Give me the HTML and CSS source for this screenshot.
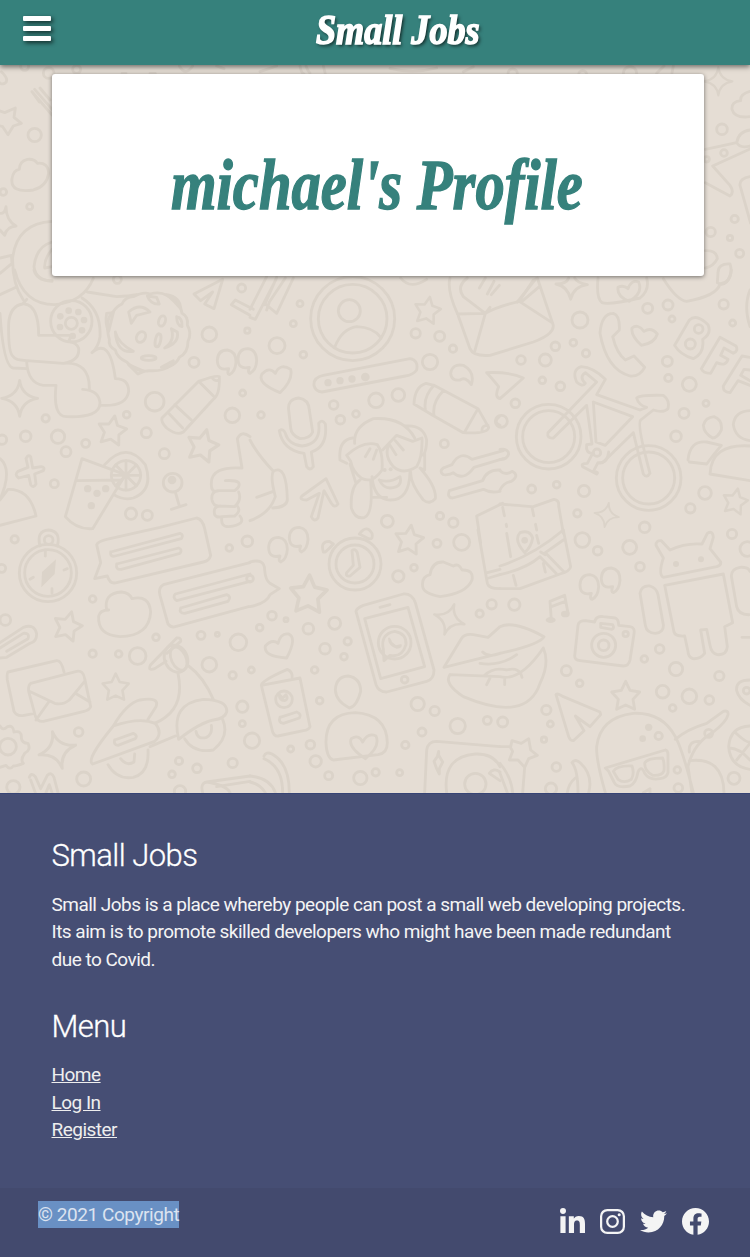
FILE: index.html
```html
<!DOCTYPE html>
<html lang="en">
<head>
<meta charset="utf-8">
<title>Small Jobs</title>
<link rel="stylesheet" href="styles.css">
</head>
<body>
<header class="navbar">
  <svg class="menu-icon" viewBox="0 0 28 25"><rect width="28" height="5" rx="1"/><rect y="10" width="28" height="5" rx="1"/><rect y="20" width="28" height="5" rx="1"/></svg>
  <div class="brand"><span class="brand-text">Small Jobs</span></div>
</header>
<main class="stage">
  <svg class="doodles" viewBox="0 65 750 728" preserveAspectRatio="none" aria-hidden="true">
    <defs>
      <path id="star" d="M0-42L13-15L42-10L22 12L27 42L0 29L-27 42L-22 12L-42-10L-13-15Z"/>
      <path id="spark" d="M0-54Q6-8 54 0Q6 8 0 54Q-6 8-54 0Q-6-8 0-54Z"/>
      <path id="quote" d="M8 38Q0 36 6 20Q-28 28-28-6Q-26-36 2-36Q28-32 28 0Q26 30 8 38Z"/>
    </defs>
    <g transform="scale(.33333)">
      <circle cx="74" cy="199" r="12"/><circle cx="146" cy="219" r="16"/><circle cx="230" cy="208" r="12"/><circle cx="104" cy="405" r="20"/><circle cx="10" cy="576" r="10"/><circle cx="89" cy="620" r="9"/>
      <path d="M4 215Q30 240 14 250Q0 256-6 240M-10 330L14 338L46 324L42 352L64 370L40 378L24 404L8 380L-12 374M36 536Q40 510 58 508Q58 484 82 478Q104 476 112 490Q144 486 146 520Q140 560 100 570Q30 580 36 536M96 275L156 345M104 268L156 328M120 264L150 300M96 275L118 306M0 640Q14 642 18 620Q18 660 48 678Q20 680 14 706L0 690M156 664Q50 670 38 774Q36 850 70 900M156 726Q108 740 102 800Q106 840 156 844M156 748Q132 776 134 804L156 800M0 774L34 766L36 790L0 820M538 198Q556 230 578 198M650 198L672 206M366 220L378 220M450 220L466 220M780 215L830 198M900 198Q904 220 912 222M918 198Q924 214 930 220M970 198L976 222M1170 205Q1240 222 1310 204M1390 215L1420 200"/>
    </g>
    <g transform="translate(500 0) scale(.33333)">
      <circle cx="38" cy="221" r="14"/><circle cx="248" cy="224" r="12"/><circle cx="390" cy="220" r="20"/><circle cx="666" cy="388" r="16"/><circle cx="672" cy="459" r="10"/><circle cx="704" cy="657" r="11"/><circle cx="632" cy="696" r="14"/><circle cx="690" cy="714" r="8"/><circle cx="719" cy="760" r="12"/><circle cx="620" cy="478" r="8"/>
      <use href="#spark" transform="translate(655 244) scale(.78)"/>
      <path d="M492 198L470 220M520 198L516 220M750 274Q720 282 722 302Q694 304 696 328Q704 356 750 350M616 448L710 428Q716 394 750 390M710 428Q720 446 750 438M752 446L638 498L690 556Q704 576 690 588L616 548M750 530Q718 536 720 556L752 670M616 752Q650 750 652 776Q640 800 616 804M654 818Q654 790 690 792Q700 820 680 846Q666 858 652 848Z"/>
    </g>
    <g transform="translate(0 270) scale(.33333)">
      <circle cx="352" cy="28" r="12"/><circle cx="725" cy="54" r="12"/><circle cx="628" cy="193" r="22"/><circle cx="582" cy="277" r="15"/><circle cx="742" cy="182" r="8"/><circle cx="728" cy="369" r="9"/><circle cx="697" cy="436" r="22"/><circle cx="464" cy="395" r="28"/><circle cx="380" cy="434" r="10"/><circle cx="439" cy="488" r="15"/><circle cx="493" cy="551" r="15"/><circle cx="137" cy="445" r="11"/><circle cx="77" cy="499" r="16"/><circle cx="174" cy="500" r="20"/><circle cx="198" cy="545" r="15"/><circle cx="257" cy="520" r="12"/><circle cx="6" cy="509" r="14"/><circle cx="163" cy="641" r="12"/><circle cx="393" cy="731" r="17"/><circle cx="442" cy="736" r="15"/><circle cx="44" cy="808" r="11"/>
      <circle cx="214" cy="154" r="62"/><circle cx="214" cy="160" r="18"/>
      <g class="solid"><circle cx="181" cy="139" r="10"/><circle cx="206" cy="122" r="10"/><circle cx="235" cy="126" r="10"/><circle cx="252" cy="150" r="10"/><circle cx="246" cy="181" r="10"/><circle cx="180" cy="171" r="10"/><circle cx="218" cy="198" r="10"/><circle cx="263" cy="656" r="11"/><circle cx="291" cy="670" r="11"/><circle cx="317" cy="656" r="11"/><circle cx="274" cy="707" r="11"/><circle cx="516" cy="630" r="13"/></g>
      <path d="M44 0Q70 104 164 104Q250 98 280 25M102 0Q110 34 156 32M0 74L48 52M80 88L68 102Q30 108 26 160Q24 250 40 260Q46 270 80 272L190 280Q240 272 236 235Q230 218 206 214L214 196L116 196Q116 108 74 102M0 130Q10 290 40 294L80 296M80 276Q84 340 130 346L168 346Q158 440 200 440Q300 444 300 398Q296 360 248 358M190 280Q270 274 268 358M246 84Q304 120 300 200Q296 230 276 248Q330 200 346 326Q386 326 386 364Q380 410 304 406M262 66L350 80Q390 78 410 74"/>
      <path d="M340 125Q350 108 366 102Q376 80 400 80Q430 64 450 72Q480 64 500 76Q540 90 546 130Q566 140 562 165Q576 190 564 214Q564 250 538 262Q530 280 510 288Q490 304 450 302Q410 310 380 276Q350 262 346 240Q324 230 328 208Q312 150 340 125Z"/>
      <path d="M386 126Q420 96 450 126L410 136L394 160ZM442 78L470 82L478 102Q452 104 442 78M500 74Q540 80 542 116Q520 90 500 74M320 130L340 128L326 184Q314 160 320 130M346 186Q354 220 400 244Q350 252 346 186M532 186Q538 220 494 234Q526 214 514 176ZM530 140Q548 144 546 170Q530 166 530 140M386 284L432 304L414 312ZM484 292L520 272Q520 294 484 292"/>
      <ellipse cx="486" cy="153" rx="10" ry="16" transform="rotate(18 486 153)"/><ellipse cx="423" cy="201" rx="13" ry="17" transform="rotate(28 423 201)"/><ellipse cx="474" cy="211" rx="8" ry="20" transform="rotate(12 474 211)"/><ellipse cx="446" cy="264" rx="22" ry="7"/>
      <use href="#spark" transform="translate(59 385)"/><use href="#star" transform="translate(337 479) rotate(10)"/><use href="#star" transform="translate(609 524) rotate(14) scale(1.1)"/>
      <path d="M582 72L668 28L642 116L614 102L638 66L602 92ZM694 104L706 90L760 118M694 104L750 136M486 444L596 334Q650 314 658 320Q660 374 640 388L550 486Q530 498 500 474Q482 456 486 444M596 334L644 382M524 404L574 450M506 430L548 474M636 322Q644 336 658 330"/>
      <use href="#quote" transform="translate(680 276)"/>
      <path d="M92 560Q84 552 78 566L84 592L54 604Q42 614 56 624L86 616L92 644Q100 656 108 642L104 612L130 602Q136 592 124 590L98 594ZM0 566Q30 590 14 650L0 690L24 658Q90 656 108 738L0 766M246 566L376 614L278 776Q230 780 196 740ZM230 632L366 630M314 584Q380 510 436 584Q462 660 400 684Q370 692 342 674"/>
      <circle cx="378" cy="616" r="44"/><path d="M334 616H422M378 572V660M347 585L409 647M347 647L409 585"/>
      <circle cx="518" cy="638" r="28"/><path d="M526 666L538 708M514 718L558 704M750 500Q724 480 712 506L726 594Q634 588 634 640Q632 670 656 662H704Q722 650 716 638Q706 630 676 632M656 662Q632 664 636 690Q640 710 660 708L704 710Q726 690 716 666M660 708Q638 710 644 734Q650 744 666 740L704 738Q724 724 712 708M666 740Q660 770 686 770Q740 764 720 738"/>
    </g>
    <g transform="translate(250 270) scale(.33333)">
      <circle cx="150" cy="101" r="9"/><circle cx="130" cy="161" r="9"/><circle cx="81" cy="227" r="24"/><circle cx="160" cy="254" r="10"/><circle cx="33" cy="435" r="10"/><circle cx="251" cy="405" r="13"/><circle cx="271" cy="449" r="13"/><circle cx="318" cy="432" r="10"/><circle cx="378" cy="391" r="22"/><circle cx="445" cy="375" r="19"/><circle cx="497" cy="190" r="14"/><circle cx="569" cy="199" r="15"/><circle cx="609" cy="236" r="11"/><circle cx="540" cy="276" r="23"/><circle cx="583" cy="521" r="12"/><circle cx="412" cy="754" r="18"/><circle cx="570" cy="738" r="11"/><circle cx="610" cy="758" r="14"/>
      <circle cx="308" cy="146" r="126"/><circle cx="308" cy="146" r="103"/><circle cx="298" cy="122" r="33"/>
      <g class="solid"><circle cx="234" cy="338" r="11"/><circle cx="270" cy="332" r="11"/><circle cx="306" cy="327" r="11"/><circle cx="346" cy="321" r="13"/><circle cx="404" cy="600" r="6"/><circle cx="422" cy="598" r="6"/></g>
      <use href="#quote" transform="translate(-8 272)"/>
      <path d="M254 232Q276 176 320 170Q370 172 392 202M0 118L50 20M0 142L16 148L78 28M44 104L80 22M46 102L80 130L130 24M50 120L58 96L106 24M90 368Q20 340 36 312Q58 288 76 310Q90 278 122 298Q130 330 90 368ZM192 346Q190 322 220 316L480 266Q506 270 500 300Q490 314 466 318L216 366Q196 364 192 346M452 24Q480 60 530 28"/>
      <use href="#star" transform="translate(533 119) rotate(10) scale(.92)"/>
      <path d="M600 24Q590 60 622 130L660 236Q670 260 720 256L850 216Q920 190 908 160L862 24M622 132L706 130L674 244M652 24Q618 50 640 80L706 130Q740 110 808 94L906 158M706 130L720 112M808 94L850 30M816 94L868 50M706 24L688 54M732 34L712 72M748 46L724 74M602 310Q606 280 640 286Q676 306 664 344Q646 318 630 330Q604 334 602 310M492 402Q494 350 528 340L552 346L684 416L716 472Q714 492 640 488L548 436ZM552 346Q520 380 526 418M580 362Q546 396 552 436M684 416L644 486M714 466Q694 466 696 484M710 308Q780 305 820 324L750 386Q732 382 746 350Q724 322 710 308M748 440Q728 456 750 466"/>
      <path d="M116 420Q112 388 146 384Q176 388 178 420L188 486Q180 506 150 506Q124 496 122 474ZM88 482Q100 474 106 490Q116 524 156 528Q214 522 206 460Q216 446 226 462Q234 530 184 546L190 590Q180 604 170 590L162 550Q98 540 88 482M0 510Q20 550 70 604Q110 580 112 690Q110 712 68 714M70 604Q60 620 76 680Q60 730 0 752M20 682L70 664M228 626L264 702Q254 716 244 700L222 662L204 744Q192 758 184 740L208 670L170 690Q146 690 156 678ZM314 520Q310 470 370 446Q460 440 494 504M466 468Q520 464 530 510Q530 540 520 556M308 504Q264 510 270 570L290 580M290 556Q340 510 382 524Q400 550 396 600Q370 640 336 626Q308 606 302 574L290 556M346 560L360 536M370 568L380 540M398 540L440 496L488 514L516 504Q518 560 500 590Q460 616 430 590Q404 560 414 532M436 512L460 540M420 526L438 554M300 582L318 640M366 620Q372 690 422 690Q478 690 480 606M330 630Q300 650 304 714Q316 750 344 742Q370 730 362 634M482 606Q480 640 520 690Q540 706 556 686Q560 650 510 594L524 600L524 550M388 630Q420 640 450 620Q456 640 440 650Q404 664 388 630M370 682H410"/>
      <path d="M580 594L606 584Q630 540 666 568L760 542M580 594Q566 604 580 614Q600 616 610 608Q640 636 672 592L760 566M598 662L698 632Q710 598 750 600M598 662Q590 682 608 684L700 658Q720 670 750 664M758 700L680 738L692 820"/>
    </g>
    <g transform="translate(500 270) scale(.33333)">
      <circle cx="240" cy="150" r="24"/><circle cx="166" cy="229" r="13"/><circle cx="220" cy="218" r="10"/><circle cx="258" cy="250" r="11"/><circle cx="136" cy="270" r="18"/><circle cx="63" cy="270" r="13"/><circle cx="127" cy="331" r="10"/><circle cx="181" cy="349" r="13"/><circle cx="46" cy="400" r="13"/><circle cx="4" cy="454" r="18"/><circle cx="443" cy="115" r="15"/><circle cx="504" cy="105" r="15"/><circle cx="516" cy="147" r="9"/><circle cx="671" cy="103" r="14"/><circle cx="698" cy="159" r="9"/><circle cx="502" cy="274" r="15"/><circle cx="505" cy="324" r="11"/><circle cx="568" cy="343" r="21"/><circle cx="618" cy="400" r="9"/><circle cx="552" cy="430" r="15"/><circle cx="528" cy="499" r="16"/><circle cx="95" cy="657" r="12"/><circle cx="170" cy="644" r="10"/><circle cx="252" cy="663" r="17"/><circle cx="232" cy="730" r="11"/><circle cx="434" cy="772" r="16"/><circle cx="571" cy="715" r="14"/><circle cx="615" cy="669" r="19"/><circle cx="596" cy="177" r="13"/><circle cx="571" cy="222" r="15"/>
      <path d="M168 42Q200 42 206 24M224 24Q230 38 262 44Q220 50 212 88Q204 50 168 42M294 24Q288 84 306 98Q326 106 420 84Q450 60 440 24M388 94Q350 80 354 52Q370 44 384 56Q394 28 416 36Q430 70 388 94M490 26Q530 90 560 94Q650 78 660 42Q690 40 694 0M52 96L108 26M750 60Q730 110 750 170M340 130Q360 136 358 180L338 200Q350 250 376 270L402 258L434 292Q420 320 390 318Q320 300 300 190Q304 130 340 130M424 226Q392 196 396 174Q414 160 432 184Q454 170 472 192Q464 220 424 226ZM524 226L568 150Q590 130 624 164Q636 190 608 208Q614 250 580 266Q540 254 524 226M660 202L708 228Q716 242 700 250L672 234L662 256L684 268Q678 290 650 278L632 310Q608 310 604 296ZM750 262L726 258L670 348Q668 366 690 368L714 332L750 346M750 300L732 298L722 316L750 332"/>
      <circle cx="146" cy="500" r="97"/><circle cx="146" cy="500" r="78"/><circle cx="446" cy="624" r="97"/><circle cx="446" cy="624" r="78"/>
      <path d="M144 488L290 336L256 308Q236 320 256 340Q246 352 230 336Q214 300 244 290Q280 292 316 328L290 374L420 420L440 412Q416 406 410 384Q420 374 490 376Q510 390 504 416Q490 430 460 420L422 450Q410 462 450 610Q440 626 430 612L400 488L312 574Q306 582 294 578L280 604Q298 606 290 612L248 590Q242 580 262 580L278 550Q256 550 260 524L276 522L260 406L160 504Q140 506 144 488M280 396L398 440L316 526L288 516Z"/><circle cx="291" cy="548" r="11"/>
      <path d="M326 546Q322 580 300 578M610 466Q616 442 642 440Q668 450 664 480Q652 504 638 504Q612 490 610 466M700 464Q704 424 750 422M700 464Q706 506 750 512M564 570Q570 510 620 516L664 526Q640 554 620 582L568 576M630 612Q634 520 750 528M630 612L750 632M0 538Q26 536 26 552Q20 570 0 568M0 602Q16 618 36 604Q60 616 34 634Q10 638 0 660M0 702Q90 710 100 710L162 688Q178 690 176 708L190 790"/>
      <path class="dash" d="M8 712L20 770M96 712L110 780"/>
      <use href="#spark" transform="translate(320 735) rotate(10) scale(.68)"/><use href="#star" transform="translate(706 692) rotate(12) scale(.88)"/>
    </g>
    <g transform="translate(0 530) scale(.33333)">
      <circle cx="5" cy="115" r="12"/><circle cx="278" cy="207" r="10"/><circle cx="16" cy="270" r="16"/><circle cx="278" cy="371" r="11"/><circle cx="356" cy="372" r="10"/><circle cx="413" cy="378" r="25"/><circle cx="468" cy="322" r="10"/><circle cx="603" cy="316" r="12"/><circle cx="652" cy="313" r="6"/><circle cx="715" cy="337" r="25"/><circle cx="628" cy="404" r="22"/><circle cx="698" cy="436" r="11"/><circle cx="688" cy="54" r="10"/><circle cx="742" cy="34" r="16"/><circle cx="727" cy="530" r="17"/><circle cx="727" cy="581" r="9"/><circle cx="236" cy="606" r="13"/><circle cx="251" cy="747" r="21"/><circle cx="40" cy="772" r="20"/><circle cx="537" cy="693" r="11"/><circle cx="591" cy="715" r="13"/><circle cx="516" cy="733" r="10"/><circle cx="698" cy="699" r="14"/><circle cx="540" cy="784" r="17"/>
      <circle cx="144" cy="129" r="86"/><circle cx="144" cy="129" r="70"/><circle cx="146" cy="30" r="13"/><path d="M120 48Q108 2 146 0Q184 4 172 48"/><path class="solid" d="M168 88L126 126L124 172L164 132Z"/><path d="M136 60V78M90 148L100 142M156 176V190M192 120L202 116"/>
      <path d="M284 146L302 98L290 44Q294 34 320 28L480-8L590-36Q608-32 614-4L632 76Q628 92 610 96L350 158Q330 164 322 138ZM332 66L540 10Q552 14 544 26L346 78Q330 82 332 66M350 102L536 54Q548 58 540 70L364 118Q346 120 350 102M750 98L490 164Q474 172 480 196L504 282Q514 294 526 290L746 230M750 132L526 192Q516 202 530 212L750 154M542 234L680 194Q696 200 684 214L554 250Q536 250 542 234M320 240Q310 190 364 186Q388 188 396 206Q448 194 452 246Q448 318 360 320Q292 316 296 258Q300 240 326 240Z"/>
      <use href="#star" transform="translate(204 286) rotate(15)"/><use href="#star" transform="translate(347 470) scale(.93)"/><use href="#spark" transform="translate(172 660) rotate(-15) scale(1.05)"/>
      <path d="M0 338L70 292Q104 280 110 312Q110 336 90 340L20 382L0 384M0 354L70 310Q90 308 84 326L20 364M24 426L170 392Q184 390 192 426M24 426Q20 430 22 450L42 544Q50 560 72 556L104 550M92 460L230 424Q250 420 254 446L272 530Q268 540 252 544L130 574Q112 576 106 558L86 484Q84 466 92 460M88 484L164 520Q188 526 208 510L254 454M146 516L108 570M226 490L270 516"/>
      <circle cx="24" cy="650" r="25"/><path d="M0 588Q8 604 22 590Q40 584 42 606Q66 600 64 624Q66 640 84 640Q94 660 74 670Q60 690 70 700Q50 708 40 708Q30 722 18 706L0 712M88 742Q94 726 106 740L122 776L142 736Q154 724 162 742L174 788M92 750L106 788M138 788L148 764L156 788"/>
      <path d="M278 702Q256 690 340 588Q380 520 420 510Q480 500 468 530L444 568M278 702L464 634Q490 610 466 580Q420 560 340 588M464 580Q558 540 534 430M450 650L526 618M344 630L400 610Q414 616 406 626L354 646Q340 644 344 630M324 704Q350 750 400 742Q448 730 444 660M362 686Q380 710 402 696L404 672M536 628Q510 520 610 508Q684 510 680 546Q674 566 640 570Q600 578 536 628M554 626Q580 670 640 660Q690 620 668 568M588 604Q592 630 620 622Q638 612 634 586M566 408Q610 440 640 508M452 404L530 324Q544 322 542 334L500 370M452 404Q442 424 464 416L498 394"/>
      <ellipse cx="528" cy="386" rx="34" ry="42" transform="rotate(-25 528 386)"/><ellipse cx="536" cy="386" rx="22" ry="37" transform="rotate(-25 536 386)"/>
      <path d="M608 788Q600 760 620 756L750 738M620 756Q680 766 690 788M650 770L750 754"/>
    </g>
    <g transform="translate(250 530) scale(.33333)">
      <circle cx="0" cy="146" r="10"/><circle cx="561" cy="40" r="12"/><circle cx="635" cy="37" r="24"/><circle cx="445" cy="139" r="17"/><circle cx="492" cy="113" r="10"/><circle cx="66" cy="257" r="13"/><circle cx="29" cy="293" r="10"/><circle cx="108" cy="269" r="6"/><circle cx="175" cy="296" r="16"/><circle cx="254" cy="280" r="18"/><circle cx="225" cy="356" r="16"/><circle cx="293" cy="334" r="11"/><circle cx="282" cy="380" r="10"/><circle cx="194" cy="420" r="10"/><circle cx="209" cy="512" r="10"/><circle cx="4" cy="420" r="9"/><circle cx="6" cy="632" r="23"/><circle cx="122" cy="657" r="9"/><circle cx="181" cy="644" r="13"/><circle cx="197" cy="694" r="17"/><circle cx="236" cy="737" r="12"/><circle cx="331" cy="744" r="20"/><circle cx="377" cy="727" r="11"/><circle cx="449" cy="728" r="9"/><circle cx="466" cy="645" r="11"/><circle cx="516" cy="606" r="12"/><circle cx="554" cy="543" r="14"/><circle cx="503" cy="522" r="20"/><circle cx="623" cy="588" r="23"/><circle cx="712" cy="571" r="12"/><circle cx="689" cy="251" r="11"/><circle cx="725" cy="223" r="14"/>
      <use href="#quote" transform="translate(84 58)"/><use href="#quote" transform="translate(146 28)"/><use href="#star" transform="translate(478 27) rotate(8)"/><use href="#star" transform="translate(176 190) rotate(3) scale(1.3)"/><use href="#spark" transform="translate(598 268) rotate(18) scale(.88)"/>
      <circle cx="315" cy="102" r="78"/><circle cx="315" cy="102" r="57"/>
      <path d="M306 62Q316 54 322 68L330 112L300 138Q286 140 290 128L310 106ZM220 66Q210 34 238 34L250 42Q240 54 226 66ZM328 12Q350-18 366 10Q370 30 356 26ZM0 96Q44 84 44 120Q46 150 60 160L88 176L60 194Q50 220 0 230M518 170Q514 140 540 134Q546 94 580 96L610 108Q626 98 636 120Q672 118 666 150Q650 190 570 200Q520 190 518 170M684 0L712 160Q716 176 750 176M712 128L750 118M716 144L750 134M110 384Q40 380 46 348Q66 326 84 340Q92 308 116 312Q142 324 110 384Z"/>
      <path d="M318 244Q320 234 340 226L460 192Q486 190 496 218L552 420Q552 448 530 454L410 486Q386 486 378 464ZM344 266L474 232L524 410L392 446ZM390 232L420 224"/><circle cx="434" cy="338" r="49"/><path d="M402 392L400 358Q390 312 434 304Q470 310 468 344Q456 384 420 376Z"/><path class="solid" d="M414 324Q420 318 426 336L438 346L454 342Q460 354 440 356Q414 348 414 324"/><circle cx="464" cy="449" r="10"/>
      <path d="M34 466L150 444L180 590Q176 600 160 602L84 618Q74 620 68 606ZM34 466Q34 452 112 418Q130 426 126 446M90 562L140 546Q156 552 148 564L100 580Q84 578 90 562"/><circle cx="102" cy="508" r="25"/><path d="M88 494Q88 510 104 512Q116 508 108 494L98 504Z"/>
      <path d="M256 480Q258 440 294 438Q332 444 332 484Q320 530 298 534Q258 514 256 480M228 640Q226 550 316 548Q410 554 412 638Q412 670 384 674L250 690Q230 684 228 640M346 686Q292 650 304 626Q326 612 338 636Q354 606 378 618Q392 650 346 686M42 678Q48 664 66 672Q118 700 118 788M42 686Q98 710 98 788M0 738Q60 744 76 788M0 756Q30 762 46 788"/>
      <path d="M582 412L634 326Q644 310 670 314L714 322L750 290Q790 270 882 320Q870 344 750 370L582 412M600 434Q580 460 640 500Q830 580 870 460Q900 400 880 354Q810 456 750 440L600 434M698 366Q716 384 750 370M690 400Q750 410 800 374M704 436Q730 410 770 420Q810 410 816 442M710 464L720 444M764 464V446"/>
      <path d="M524 788L530 660Q534 634 560 634L750 650M590 788Q576 680 676 672Q730 670 750 710M718 730L750 752M718 730Q730 712 750 726"/><circle cx="676" cy="762" r="32"/><path d="M566 664V676L578 696L568 716V732L560 716L552 694L562 680Z"/>
    </g>
    <g transform="translate(500 530) scale(.33333)">
      <circle cx="247" cy="30" r="22"/><circle cx="293" cy="62" r="13"/><circle cx="389" cy="52" r="21"/><circle cx="420" cy="110" r="13"/><circle cx="696" cy="12" r="14"/><circle cx="742" cy="57" r="22"/><circle cx="43" cy="224" r="17"/><circle cx="199" cy="422" r="15"/><circle cx="239" cy="460" r="10"/><circle cx="479" cy="357" r="13"/><circle cx="433" cy="387" r="10"/><circle cx="528" cy="417" r="20"/><circle cx="658" cy="438" r="14"/><circle cx="488" cy="485" r="19"/><circle cx="568" cy="499" r="22"/><circle cx="628" cy="510" r="13"/><circle cx="518" cy="534" r="10"/><circle cx="139" cy="540" r="14"/><circle cx="151" cy="582" r="9"/><circle cx="132" cy="629" r="8"/><circle cx="8" cy="576" r="15"/><circle cx="169" cy="711" r="13"/><circle cx="153" cy="776" r="17"/><circle cx="476" cy="618" r="11"/><circle cx="532" cy="720" r="10"/><circle cx="535" cy="774" r="13"/><circle cx="702" cy="745" r="18"/><circle cx="626" cy="610" r="12"/><circle cx="740" cy="482" r="10"/>
      <g class="solid"><circle cx="446" cy="592" r="11"/><circle cx="428" cy="626" r="10"/><circle cx="528" cy="102" r="9"/><circle cx="603" cy="88" r="9"/><circle cx="74" cy="31" r="10"/><ellipse cx="152" cy="270" rx="15" ry="9"/><ellipse cx="196" cy="252" rx="13" ry="10"/></g>
      <path d="M0 108Q100 76 190 0L212 110Q210 124 180 132L60 176H0M0 134Q80 116 120 80L168 130M136 68L190 30M136 68L190 124M122 66L136 74M74 68Q40 30 60 8Q90-2 98 24Q94 50 74 68M130 100L136 126M40 136L48 166M110 16L116 40M20 10L32 80"/>
      <use href="#quote" transform="translate(268 170)"/><use href="#quote" transform="translate(332 150)"/><use href="#star" transform="translate(377 496)"/>
      <path d="M154 270L150 214L194 196L204 250M154 230L196 214M224 378L234 286Q236 272 256 272L284 276Q288 256 310 260L346 264Q356 268 356 286L390 290Q406 292 402 312L390 390Q386 408 370 408L240 392Q224 390 224 378M302 280L338 284Q344 294 336 298L302 292Z"/><circle cx="311" cy="346" r="36"/><circle cx="311" cy="346" r="16"/><circle cx="377" cy="312" r="8"/>
      <path d="M490 142Q474 134 490 84L468 46Q468 30 484 32L510 60Q556 38 606 42L622 10Q638 0 640 22L630 56L662 96Q664 106 650 110ZM494 166L670 132L698 278L674 290L682 350Q680 376 652 374Q634 370 630 346L620 298L602 300L614 370Q600 388 578 386Q564 380 564 364L554 318Q526 320 522 306ZM420 190Q424 166 450 168Q470 174 474 194L490 284Q492 308 466 310Q440 310 436 286ZM750 124Q744 110 720 112Q694 116 694 138L710 230Q716 256 750 254M726 322H750"/>
      <path d="M168 494Q170 488 190 500L300 546L302 554L270 590L226 558L252 602L220 632Q210 632 206 620ZM316 788Q288 690 290 650Q300 562 400 550Q486 546 526 620Q548 660 580 788M316 714L496 660Q504 662 504 674L504 728Q500 744 480 746Q448 752 434 730Q424 704 414 726Q408 760 390 768Q350 776 342 756L326 724ZM340 724Q350 706 396 708Q404 730 394 748Q372 762 354 748ZM434 700Q440 684 488 684Q494 700 492 722Q486 738 458 736Q434 724 434 700M526 628Q560 598 620 580L670 544Q686 540 684 554Q680 574 640 606Q580 640 564 710L576 788M568 666Q564 632 598 634M568 692Q670 680 672 788M750 450Q706 450 710 482Q716 508 750 526"/>
      <path d="M750 588Q690 590 686 650Q690 710 750 718M704 606Q740 640 750 636M690 654Q720 656 750 690M710 690L750 640M0 650L32 650L36 632L64 640L86 626L92 660L112 676L86 686L74 712L68 788M74 712L54 690L28 690L38 664L30 650M0 700Q34 740 38 788M0 730L22 788M216 698Q226 684 242 700Q280 736 266 788M216 698Q234 720 234 788M226 744Q206 760 202 788M430 788L450 776V788"/>
    </g>
  </svg>
  <section class="card"><h1 class="profile"><span class="profile-text">michael's Profile</span></h1></section>
</main>
<footer class="footer">
  <div class="footer-body">
    <h2 class="footer-title">Small Jobs</h2>
    <p class="about">Small Jobs is a place whereby people can post a small web developing projects.<br>Its aim is to promote skilled developers who might have been made redundant<br>due to Covid.</p>
    <h2 class="footer-title menu-title">Menu</h2>
    <ul class="links"><li><a href="#">Home</a></li><li><a href="#">Log In</a></li><li><a href="#">Register</a></li></ul>
  </div>
  <div class="bottom">
    <span class="copyright">© 2021 Copyright</span>
    <div class="social">
      <svg class="linkedin" width="25" height="25" viewBox="0 0 448 448"><path d="M100 448H7V149h93zM53.800 108C24 108 0 83.500 0 53.800a53.800 53.800 0 0 1 107.600 0c0 29.700-24.100 54.200-53.800 54.200zM448 448h-92.700V302.400c0-34.700-.7-79.200-48.300-79.200-48.300 0-55.700 37.700-55.700 76.700V448h-92.800V149h89v41h1.300c12.400-23.500 42.700-48.300 87.900-48.300 94 0 111.300 61.900 111.300 142.300V448z"/></svg>
      <svg width="25" height="25" viewBox="0 0 448 448"><path fill-rule="evenodd" d="M130 0H318A130 130 0 0 1 448 130V318A130 130 0 0 1 318 448H130A130 130 0 0 1 0 318V130A130 130 0 0 1 130 0M132 40A92 92 0 0 0 40 132V316A92 92 0 0 0 132 408H316A92 92 0 0 0 408 316V132A92 92 0 0 0 316 40ZM224 109A115 115 0 1 1 224 339A115 115 0 1 1 224 109M224 149A75 75 0 1 0 224 299A75 75 0 1 0 224 149"/><circle cx="344" cy="104" r="27"/></svg>
      <svg width="27" height="23" viewBox="0 48 512 416"><path d="M459.400 151.700c.3 4.500.3 9.100.3 13.600 0 138.700-105.600 298.600-298.600 298.600-59.500 0-114.700-17.200-161.100-47.100 8.400 1 16.600 1.300 25.300 1.300 49.100 0 94.200-16.600 130.300-44.800-46.100-1-84.800-31.200-98.100-72.800 6.500 1 13 1.600 19.800 1.600 9.400 0 18.800-1.300 27.600-3.600-48.100-9.700-84.100-52-84.100-103v-1.300c14 7.800 30.200 12.700 47.400 13.300-28.300-18.800-46.800-51-46.800-87.400 0-19.500 5.200-37.400 14.300-53 51.700 63.700 129.300 105.300 216.400 109.800-1.600-7.800-2.600-15.900-2.600-24 0-57.800 46.800-104.900 104.900-104.900 30.200 0 57.500 12.700 76.700 33.100 23.700-4.500 46.500-13.300 66.600-25.300-7.800 24.400-24.400 44.800-46.100 57.800 21.100-2.300 41.600-8.100 60.400-16.200-14.300 20.800-32.200 39.300-52.600 54.300z"/></svg>
      <svg width="27" height="27" viewBox="8 8 496 496"><path d="M504 256C504 119 393 8 256 8S8 119 8 256c0 123.800 90.700 226.400 209.300 245V327.700h-63V256h63v-54.600c0-62.200 37-96.500 93.700-96.500 27.100 0 55.500 4.800 55.500 4.800v61h-31.300c-30.800 0-40.400 19.100-40.400 38.700V256h68.800l-11 71.700h-57.800V501C413.300 482.400 504 379.800 504 256z"/></svg>
    </div>
  </div>
</footer>
</body>
</html>
```

FILE: styles.css
```css
* { box-sizing: border-box; }
body { margin: 0; width: 750px; font-family: Roboto, "Liberation Sans", sans-serif; background: #464e74; }
.navbar { height: 65px; background: #36817c; display: grid; grid-template-columns: 51px 1fr; align-items: start; padding-top: 16px; position: relative; box-shadow: 0 2px 5px rgba(0,0,0,.5); }
.menu-icon { width: 28px; height: 25px; margin-left: 23px; fill: #fff; overflow: visible; filter: drop-shadow(2px 2px 2px rgba(0,0,0,.65)); }
.brand { padding-left: 265px; margin-top: -9px; height: 46px; }
.brand-text { display: inline-block; transform-origin: 0 50%; transform: scaleX(.86); white-space: nowrap; font: italic bold 42px/46px "Liberation Serif", serif; color: #fff; -webkit-text-stroke: 1.6px #fff; text-shadow: 2px 2px 4px rgba(0,0,0,.75); }
.stage { height: 728px; display: grid; grid-template-columns: 750px; grid-template-rows: 728px; background: #e5ddd4; overflow: hidden; }
.doodles, .card { grid-area: 1 / 1; }
.doodles { width: 750px; height: 728px; fill: none; stroke: #dbd3c9; stroke-width: 8.5; stroke-linecap: round; stroke-linejoin: round; }
.solid { fill: #dbd3c9; stroke: none; }
.dash { stroke-dasharray: 26 26; }
.card { z-index: 1; margin: 9px 0 0 52px; width: 652px; height: 202px; border-radius: 3px; background: #fff; box-shadow: 0 1px 4px rgba(0,0,0,.5); display: flex; justify-content: center; padding-top: 69px; }
.profile { margin: 0; width: 414px; height: 84px; }
.profile-text { display: inline-block; transform-origin: 0 50%; transform: scaleX(.814); white-space: nowrap; font: italic bold 72px/84px "Liberation Serif", serif; color: #36817c; -webkit-text-stroke: 1.4px #36817c; }
.footer { height: 464px; color: #f4f4f4; font-size: 19px; line-height: 27.4px; letter-spacing: -.51px; display: flex; flex-direction: column; }
.footer-body { height: 395px; padding: 42px 51.5px 0; border-top: 1px solid #374475; }
.footer-title { margin: 0; font-size: 31px; line-height: 40px; font-weight: 300; letter-spacing: -.55px; color: #fff; -webkit-text-stroke: .3px #fff; }
.about { margin: 15px 0 34px; white-space: nowrap; }
.links { list-style: none; margin: 14px 0 0; padding: 0; }
.links a { color: #eee; text-decoration: underline; }
.bottom { height: 69px; background: #434a6e; padding: 13px 41px 0 38px; display: flex; justify-content: space-between; align-items: flex-start; }
.copyright { background: #6990c4; color: #dce3f0; height: 27px; letter-spacing: -.44px; }
.social { display: flex; align-items: center; padding-top: 7px; gap: 15px; }
.social svg { fill: #f4f4f4; }
.linkedin { margin-top: -2px; }
```
